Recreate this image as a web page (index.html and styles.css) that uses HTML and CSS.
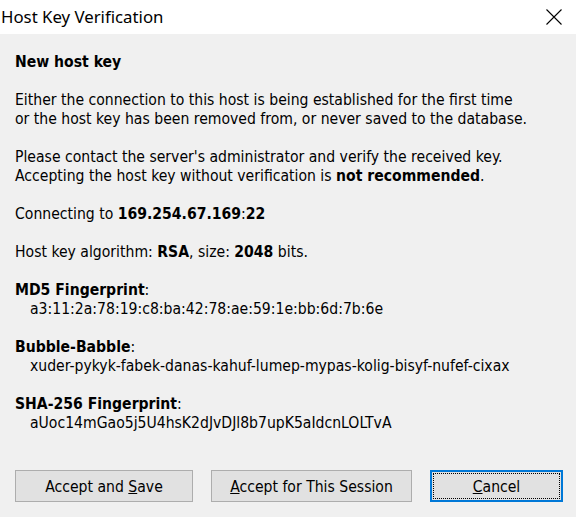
FILE: index.html
```html
<!DOCTYPE html>
<html>
<head>
<meta charset="utf-8">
<link rel="stylesheet" href="styles.css">
</head>
<body>
<div class="dialog">
  <div class="titlebar">
    <span class="title">Host Key Verification</span>
    <svg class="close" width="16" height="16" viewBox="0 0 16 16"><path d="M0.5 0.5 L15.5 15.5 M15.5 0.5 L0.5 15.5" stroke="#000" stroke-width="1.1" fill="none"/></svg>
  </div>
  <div class="content">
    <p class="line"><b>New host key</b></p>
    <p>Either the connection to this host is being established for the first time<br>or the host key has been removed from, or never saved to the database.</p>
    <p>Please contact the server's administrator and verify the received key.<br>Accepting the host key without verification is <b>not recommended</b>.</p>
    <p>Connecting to <b>169.254.67.169</b>:<b>22</b></p>
    <p>Host key algorithm: <b>RSA</b>, size: <b>2048</b> bits.</p>
    <p><b>MD5 Fingerprint</b>:<br><span class="val">a3:11:2a:78:19:c8:ba:42:78:ae:59:1e:bb:6d:7b:6e</span></p>
    <p><b>Bubble-Babble</b>:<br><span class="val">xuder-pykyk-fabek-danas-kahuf-lumep-mypas-kolig-bisyf-nufef-cixax</span></p>
    <p><b>SHA-256 Fingerprint</b>:<br><span class="val">aUoc14mGao5j5U4hsK2dJvDJl8b7upK5aIdcnLOLTvA</span></p>
  </div>
  <div class="buttons">
    <button class="btn b1">Accept and <u>S</u>ave</button>
    <button class="btn b2"><u>A</u>ccept for This Session</button>
    <button class="btn b3 focused"><span class="focus"><u>C</u>ancel</span></button>
  </div>
</div>
</body>
</html>
```

FILE: styles.css
```css
html, body {
  margin: 0;
  padding: 0;
}
body {
  width: 576px;
  height: 517px;
  overflow: hidden;
  background: #f0f0f0;
}
.dialog {
  display: flex;
  flex-direction: column;
  height: 517px;
}
.titlebar {
  height: 34px;
  background: #ffffff;
  display: flex;
  align-items: center;
  justify-content: space-between;
  padding: 0 14px 0 1px;
}
.title {
  font-family: "Noto Sans", "Open Sans", sans-serif;
  font-size: 16.8px;
  color: #000;
  margin-top: -2px;
}
.close {
  display: block;
}
.content {
  padding: 19px 0 0 15px;
  font-family: "DejaVu Sans Condensed", "DejaVu Sans", sans-serif;
  font-size: 15.6px;
  line-height: 19px;
  color: #000;
  flex: 1;
}
.content p {
  margin: 0 0 19px 0;
  white-space: nowrap;
}
.val {
  padding-left: 15px;
}
.buttons {
  display: flex;
  padding: 0 0 15px 15px;
  gap: 18px;
}
.btn {
  font-family: "DejaVu Sans Condensed", "DejaVu Sans", sans-serif;
  font-size: 15.6px;
  color: #000;
  background: #e1e1e1;
  border: 1px solid #adadad;
  height: 32px;
  padding: 2px 0 0 0;
  margin: 0;
}
.b1 { width: 178px; }
.b2 { width: 201px; }
.b3 { width: 133px; }
.focused {
  border: 2px solid #0078d7;
  padding: 1px;
}
.focus {
  display: flex;
  align-items: center;
  justify-content: center;
  height: 100%;
  padding-top: 2px;
  border: 1px dotted #000;
  box-sizing: border-box;
}
```
